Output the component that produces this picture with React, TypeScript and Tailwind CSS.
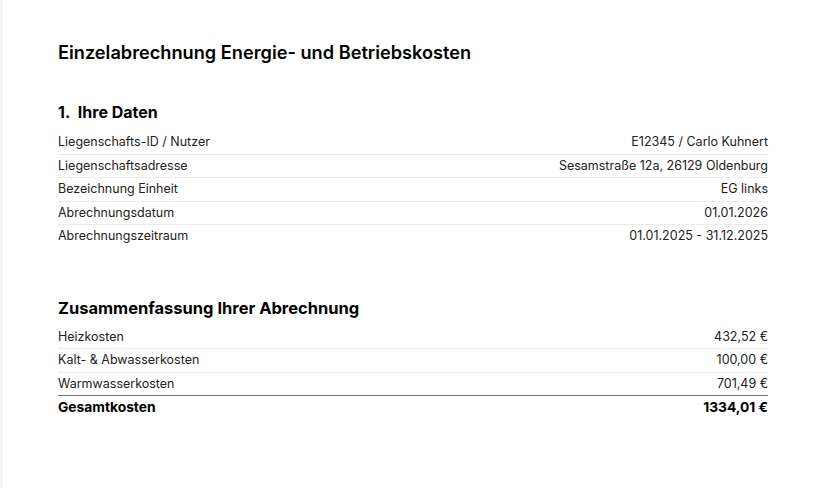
const daten = [
  ['Liegenschafts-ID / Nutzer', 'E12345 / Carlo Kuhnert'],
  ['Liegenschaftsadresse', 'Sesamstraße 12a, 26129 Oldenburg'],
  ['Bezeichnung Einheit', 'EG links'],
  ['Abrechnungsdatum', '01.01.2026'],
  ['Abrechnungszeitraum', '01.01.2025 - 31.12.2025'],
];

const kosten = [
  ['Heizkosten', '432,52 €'],
  ['Kalt- & Abwasserkosten', '100,00 €'],
  ['Warmwasserkosten', '701,49 €'],
];

function Row({ label, value, last }: { label: string; value: string; last?: boolean }) {
  return (
    <div
      className={`flex justify-between items-center py-[2px] leading-[18.5px] ${
        last ? '' : 'border-b border-[#ebebeb]'
      }`}
    >
      <span>{label}</span>
      <span>{value}</span>
    </div>
  );
}

export default function App() {
  return (
    <div
      className="flex min-h-[488px] w-[822px] bg-white text-[#1a1a1a]"
      style={{ fontFamily: 'Inter, "Liberation Sans", sans-serif' }}
    >
      <div className="w-[3px] bg-[#f4f4f4]" />
      <div className="flex-1 pl-[55px] pr-[54px] pt-[38px]">
        <h1 className="text-[18.2px] leading-[28px] font-semibold text-black">
          Einzelabrechnung Energie- und Betriebskosten
        </h1>

        {/* Ihre Daten */}
        <h2 className="mt-[34px] text-[16px] leading-[24px] font-bold text-black">
          1.&nbsp; Ihre Daten
        </h2>
        <div className="mt-[7px] text-[12.5px] text-[#222]">
          {daten.map(([l, v], i) => (
            <Row key={l} label={l} value={v} last={i === daten.length - 1} />
          ))}
        </div>

        {/* Zusammenfassung */}
        <h2 className="mt-[48px] text-[16.5px] leading-[24px] font-bold text-black">
          Zusammenfassung Ihrer Abrechnung
        </h2>
        <div className="mt-[6px] text-[12.5px] text-[#222]">
          {kosten.map(([l, v], i) => (
            <Row key={l} label={l} value={v} last={i === kosten.length - 1} />
          ))}
          <div className="flex justify-between items-center border-t border-[#777] py-[2px] leading-[18.5px] text-[13.8px] font-bold text-black">
            <span>Gesamtkosten</span>
            <span>1334,01 €</span>
          </div>
        </div>
      </div>
    </div>
  );
}
